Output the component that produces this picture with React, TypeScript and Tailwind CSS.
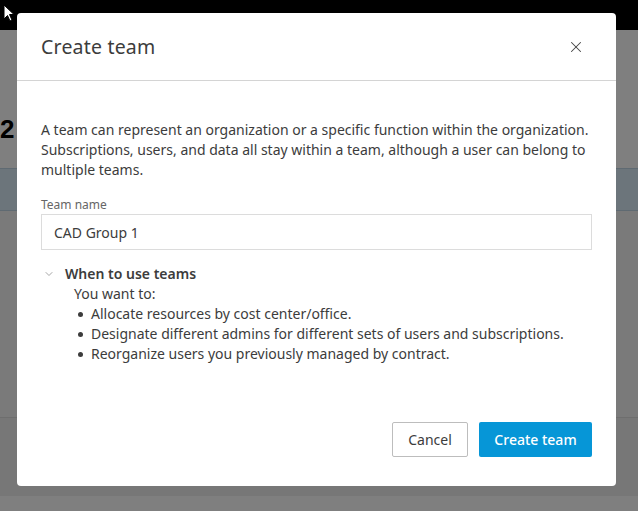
import { X, ChevronDown } from "lucide-react";

const font = { fontFamily: '"Noto Sans", "Liberation Sans", Arial, sans-serif' };

function Backdrop() {
  return (
    <div className="flex h-[511px] w-[638px] flex-col bg-[#7f7f7f]">
      <div className="h-[30px] bg-black" />
      <div className="flex h-[138px] items-end pb-[26px]">
        <span className="text-[26px] font-bold leading-none text-black" style={{ fontFamily: '"Liberation Sans", Arial, sans-serif' }}>2</span>
      </div>
      <div className="h-[43px] border-y border-[#5f6a72] bg-[#6c757b]" />
      <div className="h-[207px] border-b border-[#6e6e6e] bg-[#7a7a7a]" />
      <div className="h-[78px] bg-[#777777]" />
      <div className="flex-1 bg-[#7f7f7f]" />
    </div>
  );
}

export default function App() {
  const reasons = [
    "Allocate resources by cost center/office.",
    "Designate different admins for different sets of users and subscriptions.",
    "Reorganize users you previously managed by contract.",
  ];

  return (
    <div className="relative h-[511px] w-[638px] overflow-hidden" style={font}>
      <Backdrop />

      {/* cursor */}
      <svg className="absolute left-[3px] top-[4px]" width="12" height="18" viewBox="0 0 12 18">
        <path d="M1 1 L1 15 L4.5 11.5 L7 17 L9 16 L6.5 10.5 L11 10.5 Z" fill="#fff" stroke="#000" strokeWidth="1" />
      </svg>

      <div className="absolute left-[17px] top-[13px] flex h-[473px] w-[599px] flex-col rounded-[4px] bg-white text-[#3c3c3c]">
        <div className="flex h-[68px] items-center justify-between border-b border-[#d4d4d4] pl-6 pr-[31px]">
          <h2 className="text-[19.5px] font-normal leading-6 tracking-[0.2px] text-[#3c3c3c]">Create team</h2>
          <X className="h-[18px] w-[18px] text-[#444]" strokeWidth={1.4} />
        </div>

        <div className="flex flex-1 flex-col px-6 pt-[39px]">
          <p className="text-[14px] leading-5">
            A team can represent an organization or a specific function within the organization.
            Subscriptions, users, and data all stay within a team, although a user can belong to
            multiple teams.
          </p>

          <label className="mt-[17px] text-[12px] leading-4 text-[#666]">Team name</label>
          <div className="mt-px flex h-[36px] items-center border border-[#dcdcdc] px-[12px] text-[14px]">
            CAD Group 1
          </div>

          <div className="mt-[14px] flex items-center gap-[10px] pl-[2px]">
            <ChevronDown className="h-[12px] w-[12px] text-[#888]" strokeWidth={1.5} />
            <span className="text-[14px] font-semibold leading-5">When to use teams</span>
          </div>
          <div className="pl-[33px] text-[14px] leading-5">
            <p>You want to:</p>
            <ul className="pl-[4px]">
              {reasons.map((r) => (
                <li key={r} className="flex items-center gap-[8px]">
                  <span className="h-[5px] w-[5px] rounded-full bg-[#3c3c3c]" />
                  {r}
                </li>
              ))}
            </ul>
          </div>
        </div>

        <div className="flex justify-end gap-[11px] px-6 pb-[29px]">
          <button className="h-[35px] w-[76px] rounded-[2px] border border-[#bdbdbd] bg-white text-[14px] text-[#3c3c3c]">
            Cancel
          </button>
          <button className="h-[35px] w-[113px] rounded-[2px] bg-[#0696d7] text-[14px] font-medium text-white">
            Create team
          </button>
        </div>
      </div>
    </div>
  );
}
